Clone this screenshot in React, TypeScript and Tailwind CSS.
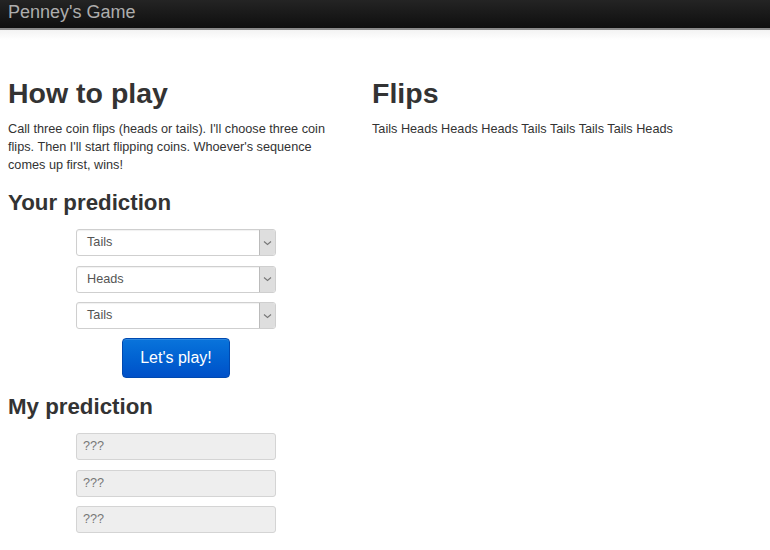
import React from 'react';

const sans = { fontFamily: '"Liberation Sans", Arial, sans-serif' };

function Chevron() {
  return (
    <svg width="9" height="6" viewBox="0 0 9 6" fill="none">
      <path d="M1 1.5 L4.5 4.5 L8 1.5" stroke="#777" strokeWidth="1.1" />
    </svg>
  );
}

function FakeSelect({ value }: { value: string }) {
  return (
    <div className="flex h-[27px] w-[200px] items-stretch rounded-[3px] border border-[#cfcfcf] bg-white shadow-[inset_0_1px_1px_rgba(0,0,0,0.06)]">
      <span className="flex flex-1 items-center pl-[10px] pt-[1px] text-[12.7px] text-[#555]">{value}</span>
      <span className="flex w-[16px] items-center justify-center rounded-r-[2px] border-l border-[#bbb] bg-[#dedede]">
        <Chevron />
      </span>
    </div>
  );
}

function Locked() {
  return (
    <div className="flex h-[27px] w-[200px] items-center rounded-[3px] border border-[#d4d4d4] bg-[#eeeeee] pl-[6px] pt-[1px] text-[12.7px] text-[#777]">
      ???
    </div>
  );
}

export default function App() {
  const flips = ['Tails', 'Heads', 'Heads', 'Heads', 'Tails', 'Tails', 'Tails', 'Tails', 'Heads'];
  const picks = ['Tails', 'Heads', 'Tails'];

  return (
    <div className="min-h-[550px] bg-white text-[#333]" style={sans}>
      {/* navbar */}
      <div className="h-[28px] bg-gradient-to-b from-[#242424] to-[#0f0f0f] pl-[8px]">
        <span className="block pt-[1px] text-[18px] leading-[22px] text-[#adadad]">Penney's Game</span>
      </div>
      <div className="h-[2px] bg-[#8a8a8a]" />
      <div className="h-[10px] bg-gradient-to-b from-[#f3f3f3] to-white" />

      <div className="flex px-[8px] pt-[37px]">
        {/* left column */}
        <div className="w-[364px]">
          <h1 className="text-[28.5px] font-bold leading-[32px] text-[#333]">How to play</h1>
          <p className="mt-[11px] w-[335px] text-[12.7px] leading-[18px]">
            Call three coin flips (heads or tails). I'll choose three coin flips. Then I'll start flipping coins. Whoever's sequence comes up first, wins!
          </p>

          <h2 className="mt-[16px] text-[22.3px] font-bold leading-[26px]">Your prediction</h2>
          <div className="mt-[13px] flex flex-col gap-[9.5px] pl-[68px]">
            {picks.map((p, i) => (
              <FakeSelect key={i} value={p} />
            ))}
          </div>
          <div className="mt-[9px] pl-[114px]">
            <button className="h-[40px] w-[108px] rounded-[4px] border border-[#0049b0] bg-gradient-to-b from-[#0a74db] to-[#0050c8] text-[16px] text-white shadow-[inset_0_1px_0_rgba(255,255,255,0.15)]">
              Let's play!
            </button>
          </div>

          <h2 className="mt-[16px] text-[22.3px] font-bold leading-[26px]">My prediction</h2>
          <div className="mt-[13px] flex flex-col gap-[9.5px] pl-[68px]">
            <Locked />
            <Locked />
            <Locked />
          </div>
        </div>

        {/* right column */}
        <div className="flex-1">
          <h1 className="text-[28.5px] font-bold leading-[32px]">Flips</h1>
          <p className="mt-[11px] text-[12.7px] leading-[18px]">{flips.join(' ')}</p>
        </div>
      </div>
    </div>
  );
}
